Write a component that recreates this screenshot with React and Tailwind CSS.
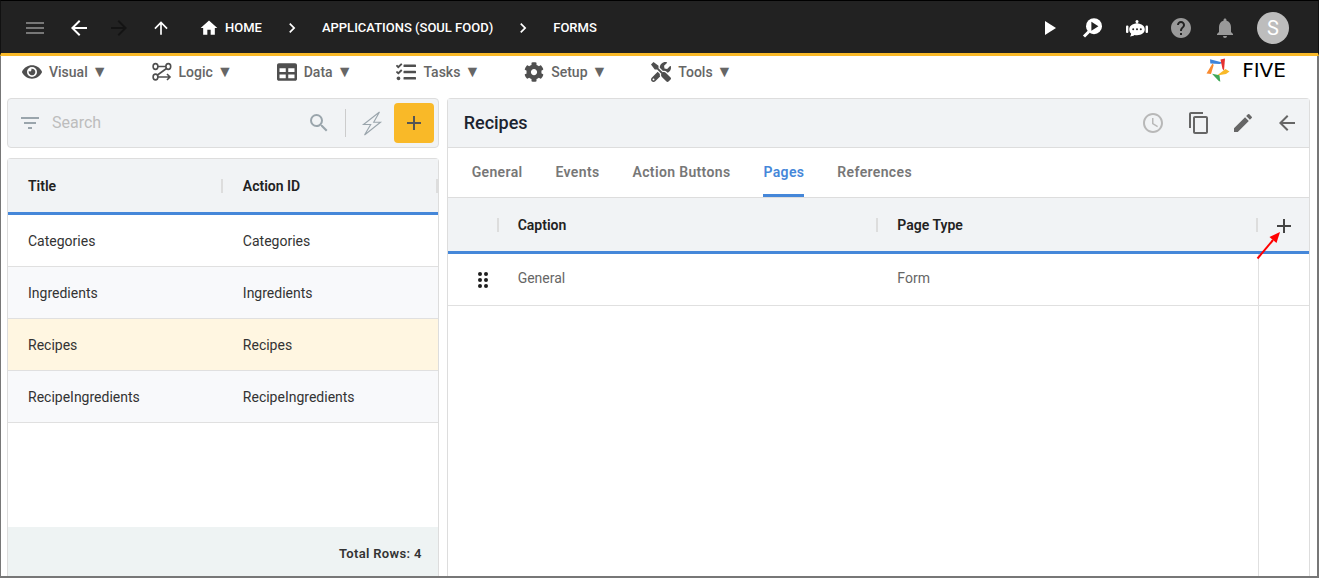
import React, { useState } from "react";
import {
  MdMenu,
  MdArrowBack,
  MdArrowForward,
  MdArrowUpward,
  MdHome,
  MdChevronRight,
  MdPlayArrow,
  MdHelp,
  MdNotifications,
  MdFilterList,
  MdSearch,
  MdAdd,
  MdAccessTime,
  MdContentCopy,
  MdEdit,
} from "react-icons/md";
import { FaEye, FaTable, FaTasks, FaCog, FaTools } from "react-icons/fa";

const LogicIcon = () => (
  <svg width="20" height="20" viewBox="0 0 20 20" fill="none" stroke="currentColor" strokeWidth="1.6">
    <ellipse cx="3.5" cy="4.5" rx="2.4" ry="2.9" />
    <ellipse cx="16.3" cy="4.5" rx="2.4" ry="2.9" />
    <ellipse cx="3.5" cy="15" rx="2.4" ry="2.9" />
    <path d="M6 4.5h8M14.5 6.5L5.5 13M6 15h11.5M15 12l3 3-3 3" />
  </svg>
);

const DebugIcon = () => (
  <svg width="24" height="24" viewBox="0 0 24 24">
    <circle cx="13" cy="10.2" r="8" fill="white" />
    <path d="M8 15.5l-5 5" stroke="white" strokeWidth="3" />
    <path d="M10.4 5.8v9l7-4.5z" fill="#222222" />
  </svg>
);

const BotIcon = () => (
  <svg width="24" height="24" viewBox="0 0 24 24" fill="white">
    <circle cx="12" cy="5.6" r="1.5" />
    <path d="M11.4 6h1.2v3h-1.2z" />
    <path d="M12 7.4c4.6 0 7.8 2.4 7.8 5.9s-3.2 5.9-7.8 5.9c-.9 0-1.7-.1-2.5-.3-1.2 1-2.7 1.4-4.5 1.5.8-.9 1.1-1.8 1.1-2.8-1.2-1.1-1.9-2.6-1.9-4.3 0-3.5 3.2-5.900 7.800-5.900z" />
    <rect x="1" y="9.5" width="2.400" height="7.500" rx="1" />
    <rect x="20.600" y="9.500" width="2.400" height="7.500" rx="1" />
    <circle cx="8.200" cy="13.300" r="1" fill="#222222" />
    <circle cx="12" cy="13.300" r="1" fill="#222222" />
    <circle cx="15.800" cy="13.300" r="1" fill="#222222" />
  </svg>
);

const BoltIcon = () => (
  <svg width="24" height="28" viewBox="0 0 24 28" fill="none" stroke="#9aa5ac" strokeWidth="1.1">
    <path d="M19.5 3L3.5 15.5h7.200L4.500 26 20.500 13.300h-6.800z" />
  </svg>
);

const FiveMark = () => (
  <svg width="24" height="24" viewBox="0 0 24 24">
    <path d="M4 1.200l13.500 3.600-4 1.200-9.200-.5z" fill="#3f84d9" />
    <path d="M14.500 1.500L19 .500l-1 12-1.500-1.500z" fill="#e5312f" />
    <path d="M23.500 13.500l-4-2.500-8.500 6.500 9-1.500z" fill="#f9b928" />
    <path d="M6 15.800l7.500 1.400.8 6.600-1.800-1z" fill="#3fa856" />
    <path d="M6.500 5.500l1.200 1.500-2.700 9L.500 15.500z" fill="#f98a2f" />
  </svg>
);

const DragIcon = () => (
  <svg width="12" height="16" viewBox="0 0 12 16" fill="#1f1f1f">
    <circle cx="3" cy="2" r="2" />
    <circle cx="9" cy="2" r="2" />
    <circle cx="3" cy="8" r="2" />
    <circle cx="9" cy="8" r="2" />
    <circle cx="3" cy="14" r="2" />
    <circle cx="9" cy="14" r="2" />
  </svg>
);

const menus = [
  { name: "Visual", icon: <FaEye size={20} /> },
  { name: "Logic", icon: <LogicIcon /> },
  { name: "Data", icon: <FaTable size={20} /> },
  { name: "Tasks", icon: <FaTasks size={20} /> },
  { name: "Setup", icon: <FaCog size={20} /> },
  { name: "Tools", icon: <FaTools size={20} /> },
];

const forms = ["Categories", "Ingredients", "Recipes", "RecipeIngredients"];
const tabs = ["General", "Events", "Action Buttons", "Pages", "References"];
const pages = [{ caption: "General", type: "Form" }];

const Header = () => (
  <header className="flex items-center h-14 pt-0.5 pl-[22px] pr-[29px] bg-[#222222] border-x border-t border-x-[#111111] border-t-black border-b-3 border-b-[#f9b928] text-white">
    <button type="button" aria-label="Menu" className="text-[#777777]">
      <MdMenu size={24} />
    </button>
    <button type="button" aria-label="Back" className="ml-5">
      <MdArrowBack size={24} />
    </button>
    <button type="button" aria-label="Forward" className="ml-4 text-[#141414]">
      <MdArrowForward size={24} />
    </button>
    <button type="button" aria-label="Up" className="ml-5">
      <MdArrowUpward size={20} />
    </button>
    <nav className="flex items-center ml-7 text-[13px] font-medium">
      <a href="#home" className="flex items-center gap-1.5">
        <MdHome size={20} />
        HOME
      </a>
      <MdChevronRight size={20} className="mx-5" />
      <a href="#applications">APPLICATIONS (SOUL FOOD)</a>
      <MdChevronRight size={20} className="mx-5" />
      <a href="#forms">FORMS</a>
    </nav>
    <div className="flex items-center gap-5 ml-auto">
      <button type="button" aria-label="Run"><MdPlayArrow size={24} /></button>
      <button type="button" aria-label="Inspect"><DebugIcon /></button>
      <button type="button" aria-label="Assistant"><BotIcon /></button>
      <button type="button" aria-label="Help" className="text-[#999999]"><MdHelp size={24} /></button>
      <button type="button" aria-label="Notifications" className="text-[#999999]"><MdNotifications size={24} /></button>
      <button type="button" className="w-8 h-8 rounded-full bg-[#bdbdbd] text-xl">S</button>
    </div>
  </header>
);

const MenuBar = () => (
  <div className="flex items-start justify-between h-[42px] pl-[15px] pr-4">
    <nav className="flex items-center gap-11 h-8 text-sm font-medium text-[#666666]">
      {menus.map((menu) => (
        <button key={menu.name} type="button" className="flex items-center gap-[7px]">
          <span className="text-[#4f4f4f]">{menu.icon}</span>
          <span className="flex items-center gap-1">
            {menu.name}
            <span className="text-base leading-5">▼</span>
          </span>
        </button>
      ))}
    </nav>
    <div className="flex items-center gap-1 h-7 text-black">
      <FiveMark />
      <span className="w-[60px] text-center font-['DejaVu_Sans',sans-serif] text-xl">FIVE</span>
    </div>
  </div>
);

const FormList = () => {
  const [selected, setSelected] = useState("Recipes");
  const [search, setSearch] = useState("");

  return (
    <div className="flex flex-col gap-2.5">
      <div className="flex items-center h-[50px] pl-2.5 pr-1 bg-[#f1f3f5] border border-[#dddddd] rounded">
        <MdFilterList size={24} className="text-[#9aa5ac]" />
        <input
          type="text"
          aria-label="Search"
          placeholder="Search"
          value={search}
          onChange={(e) => setSearch(e.target.value)}
          className="flex-1 min-w-0 px-2.5 text-base text-[#333333] placeholder:text-[#bdbdbd] focus:outline-none"
        />
        <button type="button" aria-label="Run search" className="text-[#9aa5ac]">
          <MdSearch size={24} />
        </button>
        <div className="w-px h-7 mx-3.5 bg-[#cccccc]"></div>
        <button type="button" aria-label="Quick add"><BoltIcon /></button>
        <button type="button" aria-label="Add form" className="flex items-center justify-center w-10 h-10 ml-2.5 rounded bg-[#f9b928] text-[#555555]">
          <MdAdd size={24} />
        </button>
      </div>

      <div className="flex flex-col flex-1 border border-b-0 border-[#dddddd] rounded-t">
        <table className="w-full table-fixed border-separate border-spacing-0 text-sm text-left text-[#333333]">
          <thead>
            <tr className="bg-[#f1f3f5]">
              {["Title", "Action ID"].map((col) => (
                <th key={col} className="h-14 pl-5 border-b-3 border-[#4587d9] font-semibold text-[#222222]">
                  <div className="flex items-center justify-between">
                    {col}
                    <span className="w-0.5 h-3.5 bg-[#dddddd]"></span>
                  </div>
                </th>
              ))}
            </tr>
          </thead>
          <tbody>
            {forms.map((form, i) => (
              <tr
                key={form}
                onClick={() => setSelected(form)}
                className={form === selected ? "bg-[#fff6e1]" : i % 2 ? "bg-[#f8f9fb]" : "bg-white"}
              >
                <td className="h-13 pl-5 border-b border-[#e0e0e0]">{form}</td>
                <td className="h-13 pl-5 border-b border-[#e0e0e0]">{form}</td>
              </tr>
            ))}
          </tbody>
        </table>
        <div className="flex items-center justify-end h-[49px] pt-1 pr-4 mt-auto bg-[#eef3f3] text-[13px] font-semibold tracking-wide text-[#333333]">
          Total Rows: {forms.length}
        </div>
      </div>
    </div>
  );
};

const FormDetail = () => {
  const [tab, setTab] = useState("Pages");

  return (
    <div className="flex flex-col border border-b-0 border-[#dddddd] rounded-t">
      <div className="flex items-center h-[49px] pl-4 pr-2.5 bg-[#f1f3f5] border-b border-[#dddddd]">
        <h1 className="text-lg font-medium text-[#1c2430]">Recipes</h1>
        <div className="flex items-center gap-5 ml-auto text-[#666666]">
          <button type="button" aria-label="History" className="mr-0.5 text-[#b8b8b8]"><MdAccessTime size={24} /></button>
          <button type="button" aria-label="Copy"><MdContentCopy size={24} /></button>
          <button type="button" aria-label="Edit"><MdEdit size={24} /></button>
          <button type="button" aria-label="Close"><MdArrowBack size={24} /></button>
        </div>
      </div>

      <div className="flex gap-[33px] h-[50px] pl-6 border-b border-[#dddddd] text-sm font-semibold tracking-wide">
        {tabs.map((name) => (
          <button
            key={name}
            type="button"
            onClick={() => setTab(name)}
            className={`pt-0.5 border-b-3 ${
              name === tab ? "border-[#4587d9] text-[#4587d9]" : "border-transparent text-[#777777]"
            }`}
          >
            {name}
          </button>
        ))}
      </div>

      <table className="w-full table-fixed border-separate border-spacing-0 text-sm text-left">
        <thead>
          <tr className="bg-[#f1f3f5] text-[#222222]">
            <th className="w-[51px] h-14 border-b-3 border-[#4587d9]">
              <span className="block w-0.5 h-3.5 ml-auto bg-[#dddddd]"></span>
            </th>
            {["Caption", "Page Type"].map((col) => (
              <th key={col} className="pl-[19px] border-b-3 border-[#4587d9] font-semibold">
                <div className="flex items-center justify-between">
                  {col}
                  <span className="w-0.5 h-3.5 bg-[#dddddd]"></span>
                </div>
              </th>
            ))}
            <th className="relative w-[51px] border-b-3 border-[#4587d9]">
              <button type="button" aria-label="Add page" className="block pt-0.5 mx-auto text-[#444444]">
                <MdAdd size={24} />
              </button>
              <svg className="absolute -left-1 top-8" width="28" height="32" viewBox="0 0 28 32">
                <path d="M3.5 28.5L19 10" stroke="#ff0000" strokeWidth="2" />
                <path d="M26 2l-3.500 11-7-6z" fill="#ff0000" />
              </svg>
            </th>
          </tr>
        </thead>
        <tbody>
          {pages.map((page) => (
            <tr key={page.caption} className="text-[#666666]">
              <td className="h-13 pl-[29px] border-b border-[#e0e0e0]"><DragIcon /></td>
              <td className="pl-[19px] pb-1 border-b border-[#e0e0e0]">{page.caption}</td>
              <td className="pl-[19px] pb-1 border-b border-[#e0e0e0]">{page.type}</td>
              <td className="border-l border-b border-[#e0e0e0]"></td>
            </tr>
          ))}
        </tbody>
      </table>
      <div className="flex-1 w-[51px] ml-auto border-l border-[#e0e0e0]"></div>
    </div>
  );
};

const App = () => {
  return (
    <div className="flex flex-col min-h-screen bg-white font-[Roboto,sans-serif]">
      <Header />
      <div className="flex flex-col flex-1 pl-1.5 pr-[7px] border-l border-r-2 border-b-2 border-[#777777]">
        <MenuBar />
        <main className="grid flex-1 grid-cols-[1fr_2fr] gap-2">
          <FormList />
          <FormDetail />
        </main>
      </div>
    </div>
  );
};

export default App;
